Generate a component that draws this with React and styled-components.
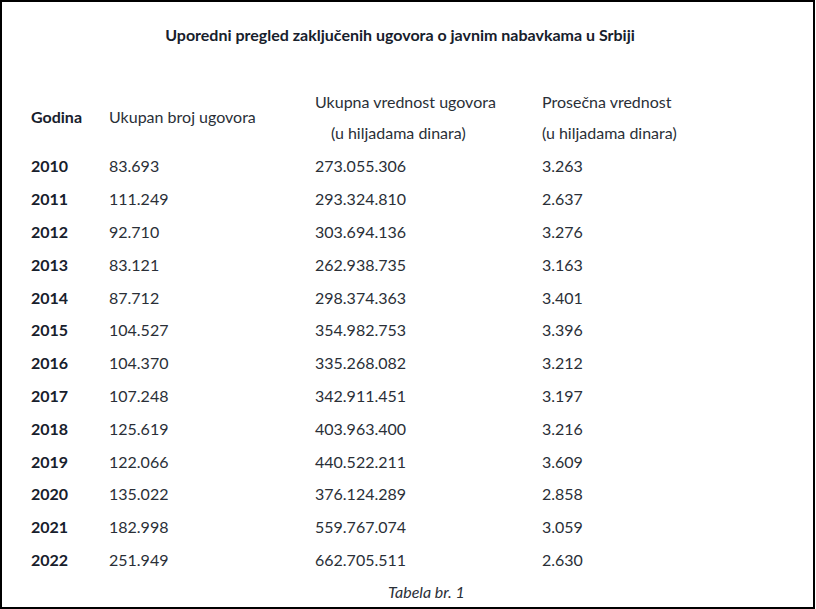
import React from "react";
import styled, { createGlobalStyle } from "styled-components";

const Global = createGlobalStyle`
  html, body { margin: 0; padding: 0; background: #fff; }
  body { font-family: Lato, "Open Sans", sans-serif; }
`;

const Frame = styled.div`
  box-sizing: border-box;
  width: 815px;
  height: 609px;
  border: 2px solid #000;
  background: #fff;
  display: flex;
  flex-direction: column;
  overflow: hidden;
`;

const Title = styled.h1`
  margin: 21px 0 0 0;
  padding-right: 15px;
  font-size: 16px;
  line-height: 24px;
  font-weight: 700;
  color: #17202c;
  text-align: center;
`;

const Table = styled.table`
  margin: 37px 0 0 29px;
  border-collapse: collapse;
  table-layout: fixed;
  width: 760px;
  font-size: 16px;
  color: #2a2f37;
`;

const Col = styled.col`
  width: ${(p) => p.$w}px;
`;

const HeadCell = styled.th`
  padding: 0 0 1px 0;
  height: 65px;
  text-align: left;
  vertical-align: middle;
  font-weight: ${(p) => (p.$bold ? 700 : 400)};
  color: ${(p) => (p.$bold ? "#17202c" : "#2a2f37")};
  line-height: 31px;
`;

const Indent = styled.span`
  padding-left: ${(p) => p.$pad || 0}px;
`;

const Cell = styled.td`
  padding: 0;
  height: 32.8px;
  line-height: 20px;
  vertical-align: middle;
  font-weight: ${(p) => (p.$bold ? 700 : 400)};
  color: ${(p) => (p.$bold ? "#17202c" : "#2a2f37")};
`;

const Caption = styled.div`
  margin-top: 6px;
  padding-left: 38px;
  text-align: center;
  font-size: 16px;
  font-style: italic;
  color: #2a2f37;
  line-height: 20px;
`;

const rows = [
  ["2010", "83.693", "273.055.306", "3.263"],
  ["2011", "111.249", "293.324.810", "2.637"],
  ["2012", "92.710", "303.694.136", "3.276"],
  ["2013", "83.121", "262.938.735", "3.163"],
  ["2014", "87.712", "298.374.363", "3.401"],
  ["2015", "104.527", "354.982.753", "3.396"],
  ["2016", "104.370", "335.268.082", "3.212"],
  ["2017", "107.248", "342.911.451", "3.197"],
  ["2018", "125.619", "403.963.400", "3.216"],
  ["2019", "122.066", "440.522.211", "3.609"],
  ["2020", "135.022", "376.124.289", "2.858"],
  ["2021", "182.998", "559.767.074", "3.059"],
  ["2022", "251.949", "662.705.511", "2.630"],
];

export default function App() {
  return (
    <>
      <Global />
      <Frame>
        <Title>Uporedni pregled zaključenih ugovora o javnim nabavkama u Srbiji</Title>
        <Table>
          <colgroup>
            <Col $w={78} />
            <Col $w={206} />
            <Col $w={227} />
            <Col $w={249} />
          </colgroup>
          <thead>
            <tr>
              <HeadCell $bold>Godina</HeadCell>
              <HeadCell>Ukupan broj ugovora</HeadCell>
              <HeadCell>
                Ukupna vrednost ugovora
                <br />
                <Indent $pad={16}>(u hiljadama dinara)</Indent>
              </HeadCell>
              <HeadCell>
                Prosečna vrednost
                <br />
                (u hiljadama dinara)
              </HeadCell>
            </tr>
          </thead>
          <tbody>
            {rows.map((r) => (
              <tr key={r[0]}>
                <Cell $bold>{r[0]}</Cell>
                <Cell>{r[1]}</Cell>
                <Cell>{r[2]}</Cell>
                <Cell>{r[3]}</Cell>
              </tr>
            ))}
          </tbody>
        </Table>
        <Caption>Tabela br. 1</Caption>
      </Frame>
    </>
  );
}
